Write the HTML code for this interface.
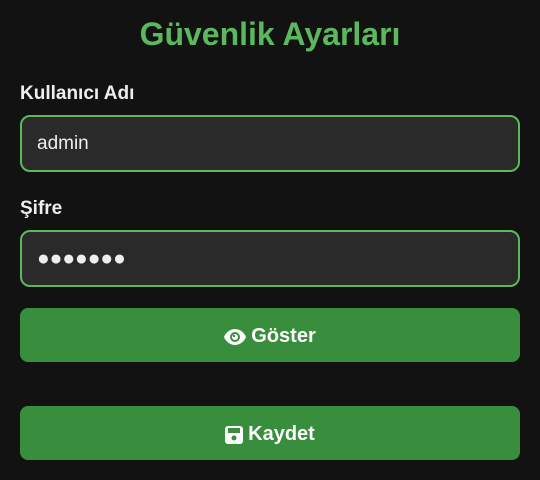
<!DOCTYPE html>
<html><head><style>
body{margin:0;background:#121212;width:540px;height:480px;overflow:hidden;font-family:"Liberation Sans",sans-serif;}
h1{position:absolute;top:15px;left:0;width:540px;margin:0;text-align:center;color:#5cb85c;font-size:32px;font-weight:bold;line-height:38px;}
.lbl{position:absolute;left:20px;color:#eee;font-weight:bold;font-size:19px;}
.inp{position:absolute;left:20px;width:496px;height:53px;border:2px solid #5cb85c;border-radius:10px;background:#2a2a2a;box-sizing:content-box;color:#eee;font-size:19px;line-height:53px;}
.inp span{margin-left:15px;}
.btn{position:absolute;left:20px;width:500px;height:54px;padding-top:3px;box-sizing:border-box;background:#388e3c;border-radius:8px;color:#fff;font-weight:bold;font-size:20px;display:flex;align-items:center;justify-content:center;gap:5px;}
</style></head><body>
<h1>Güvenlik Ayarları</h1>
<div class="lbl" style="top:83px">Kullanıcı Adı</div>
<div class="inp" style="top:115px"><span>admin</span></div>
<div class="lbl" style="top:198px">Şifre</div>
<div class="inp" style="top:230px"><span style="letter-spacing:0px;font-size:21px">●●●●●●●</span></div>
<div class="btn" style="top:308px"><svg width="22" height="16" viewBox="0 0 22 16"><path d="M11 0C5 0 1 5 0 8c1 3 5 8 11 8s10-5 11-8C21 5 17 0 11 0z" fill="#fff"/><circle cx="11" cy="8" r="5" fill="#388e3c"/><circle cx="11" cy="8" r="3" fill="#fff"/><circle cx="10" cy="7" r="1.2" fill="#388e3c"/></svg>Göster</div>
<div class="btn" style="top:406px"><svg width="18" height="18" viewBox="0 0 18 18"><rect x="0" y="0" width="18" height="18" rx="3" fill="#fff"/><rect x="3" y="2" width="12" height="5" fill="#388e3c"/><circle cx="9" cy="12" r="2.5" fill="#388e3c"/></svg>Kaydet</div>
</body></html>
